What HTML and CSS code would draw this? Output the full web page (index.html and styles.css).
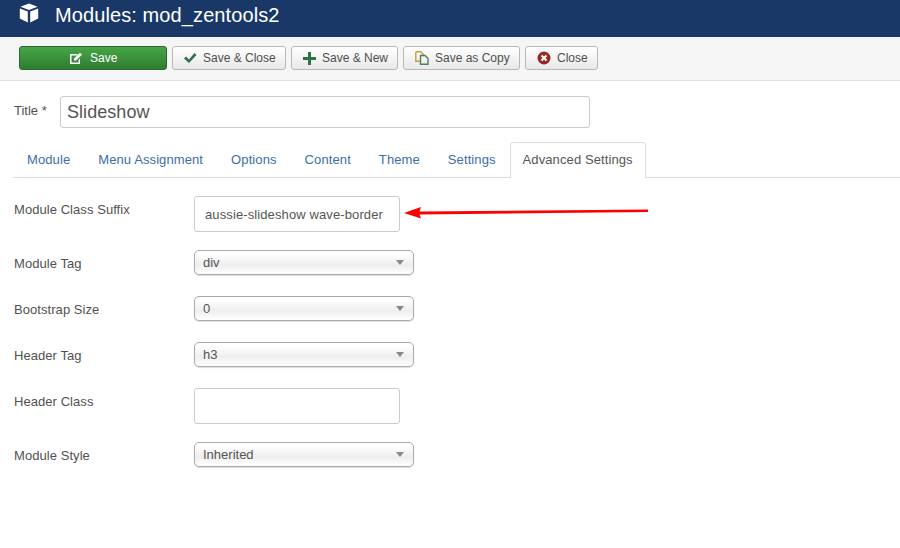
FILE: index.html
```html
<!DOCTYPE html>
<html lang="en">
<head>
    <meta charset="UTF-8">
    <meta name="viewport" content="width=device-width, initial-scale=1.0">
    <title>Modules: mod_zentools2</title>
    <link rel="stylesheet" href="styles.css">
</head>
<body>
    <header class="titlebar">
        <svg class="cube" width="20" height="20" viewBox="0 0 20 20"><path d="M10 0.500l8.500 3.200-8.500 3.300-8.500-3.300z" fill="#fff"/><path d="M0.800 5.500l8 3.100v10.900l-8-4z" fill="#fff"/><path d="M19.200 5.500l-8 3.100v10.900l8-4z" fill="#fff"/></svg>
        <h1>Modules: mod_zentools2</h1>
    </header>

    <div class="toolbar">
        <button class="btn btn-save">
            <svg width="14" height="13" viewBox="0 0 14 13"><path d="M1 2h8L7.500 3.500H2.500v7h7V8L11 6.500V12H1z" fill="#fff"/><path d="M5 6.500L11 .8l2 2-6 5.700H5z" fill="#fff"/></svg>
            Save
        </button>
        <button class="btn btn-close-save">
            <svg width="14" height="12" viewBox="0 0 14 12"><path d="M1 6.500l2-2 3 3L11.500 1l2 2L6 11z" fill="#2f6f4a"/></svg>
            Save &amp; Close
        </button>
        <button class="btn btn-new">
            <svg width="13" height="13" viewBox="0 0 13 13"><path d="M5 0h3v5h5v3H8v5H5V8H0V5h5z" fill="#2f6f4a"/></svg>
            Save &amp; New
        </button>
        <button class="btn btn-copy">
            <svg width="14" height="14" viewBox="0 0 14 14"><path d="M.8.800h5l2.500 2.500v2M.8.800v9.400h4" fill="none" stroke="#c9a13c" stroke-width="1.400"/><path d="M5.500 4.500h4.500l3 3v5.700H5.500z" fill="none" stroke="#4f7f55" stroke-width="1.400"/></svg>
            Save as Copy
        </button>
        <button class="btn btn-close">
            <svg width="14" height="14" viewBox="0 0 14 14"><circle cx="7" cy="7" r="6.500" fill="#942a25"/><path d="M4.500 4.500l5 5m0-5l-5 5" stroke="#fff" stroke-width="2"/></svg>
            Close
        </button>
    </div>

    <main class="content">
        <div class="title-row">
            <label class="title-label">Title *</label>
            <input class="title-input" type="text" value="Slideshow">
        </div>

        <ul class="tabs">
            <li><a>Module</a></li>
            <li><a>Menu Assignment</a></li>
            <li><a>Options</a></li>
            <li><a>Content</a></li>
            <li><a>Theme</a></li>
            <li><a>Settings</a></li>
            <li class="active"><a>Advanced Settings</a></li>
        </ul>

        <div class="form">
            <div class="row row-text">
                <label>Module Class Suffix</label>
                <input class="field" type="text" value="aussie-slideshow wave-border">
                <svg class="arrow" width="248" height="16" viewBox="0 0 248 16"><path d="M1 9L18 3l-1.500 4.500L245 5.500V8L16.500 10.500 18 14.500z" fill="#f00"/></svg>
            </div>
            <div class="row row-select">
                <label>Module Tag</label>
                <div class="select">div</div>
            </div>
            <div class="row row-select">
                <label>Bootstrap Size</label>
                <div class="select">0</div>
            </div>
            <div class="row row-select">
                <label>Header Tag</label>
                <div class="select">h3</div>
            </div>
            <div class="row row-text">
                <label>Header Class</label>
                <input class="field" type="text">
            </div>
            <div class="row row-select">
                <label>Module Style</label>
                <div class="select">Inherited</div>
            </div>
        </div>
    </main>
</body>
</html>
```

FILE: styles.css
```css
* { box-sizing: border-box; }
body {
    margin: 0;
    background: #fff;
    font-family: "Liberation Sans", Arial, sans-serif;
    font-size: 13px;
    color: #515151;
}
.titlebar {
    height: 37px;
    background: #1a3867;
    display: flex;
    align-items: center;
    padding: 0 0 8px 19px;
    color: #fff;
}
.titlebar h1 {
    margin: 0 0 0 16px;
    font-size: 20px;
    font-weight: normal;
    line-height: 28px;
    letter-spacing: .1px;
}
.cube { flex: none; margin-top: -3px; }
.toolbar {
    height: 44px;
    padding: 9px 0 0 19px;
    display: flex;
    gap: 5px;
    background: #f5f5f5;
    border-bottom: 1px solid #e3e3e3;
}
.btn {
    height: 24px;
    border: 1px solid #b8b8b8;
    border-radius: 3px;
    background: linear-gradient(#fff, #e8e8e8);
    font: 12px "Liberation Sans", Arial, sans-serif;
    color: #4f4f4f;
    display: flex;
    align-items: center;
    justify-content: flex-start;
    gap: 6px;
    padding: 0;
}
.btn-save {
    width: 148px;
    padding-left: 49px;
    gap: 7px;
    background: linear-gradient(#46a546, #2f7d32);
    border-color: #2a6a2d;
    color: #fff;
}
.btn-close-save { width: 114px; padding-left: 10px; }
.btn-new { width: 107px; padding-left: 11px; }
.btn-copy { width: 117px; padding-left: 11px; }
.btn-close { width: 73px; padding-left: 11px; }
.content { padding: 0 0 0 14px; }
.title-row {
    display: flex;
    align-items: center;
    padding-top: 15px;
}
.title-label { width: 46px; font-size: 13px; margin-top: -3px; }
.title-input {
    width: 530px;
    height: 32px;
    border: 1px solid #ccc;
    border-radius: 3px;
    padding: 0 6px;
    font: 18px "Liberation Sans", Arial, sans-serif;
    letter-spacing: .05px;
    color: #555;
}
.tabs {
    list-style: none;
    margin: 14px 0 0 -1px;
    padding: 0;
    display: flex;
    height: 36px;
    border-bottom: 1px solid #ddd;
    letter-spacing: .1px;
}
.tabs li { padding: 0 13px; height: 36px; line-height: 34px; border: 1px solid transparent; border-bottom: 0; }
.tabs a { color: #3d6ea8; }
.tabs li.active {
    background: #fff;
    border-color: #ddd;
    border-radius: 4px 4px 0 0;
    padding: 0 12px;
}
.tabs li.active a { color: #555; }
.form { padding-top: 18px; }
.row { display: flex; position: relative; }
.row label { width: 180px; font-size: 13px; letter-spacing: .06px; }
.row-text { height: 36px; margin-bottom: 18px; }
.row-text label { padding-top: 6px; }
.row-select { height: 25px; align-items: center; margin-bottom: 21px; }
.row-select label { padding-top: 2px; }
.field {
    width: 206px;
    height: 36px;
    border: 1px solid #ccc;
    border-radius: 3px;
    padding: 0 10px;
    font: 13px "Liberation Sans", Arial, sans-serif;
    letter-spacing: .11px;
    color: #555;
}
.arrow { position: absolute; left: 389px; top: 8px; }
.select {
    width: 220px;
    height: 25px;
    border: 1px solid #aaa;
    border-radius: 5px;
    box-shadow: 0 1px 1px #ddd;
    background: linear-gradient(#fff 10%, #eee 60%, #fff 100%);
    padding-left: 8px;
    line-height: 23px;
    font-size: 13px;
    color: #555;
    position: relative;
}
.select::after {
    content: "";
    position: absolute;
    right: 9px;
    top: 9px;
    border-left: 4px solid transparent;
    border-right: 4px solid transparent;
    border-top: 5px solid #888;
}
```
